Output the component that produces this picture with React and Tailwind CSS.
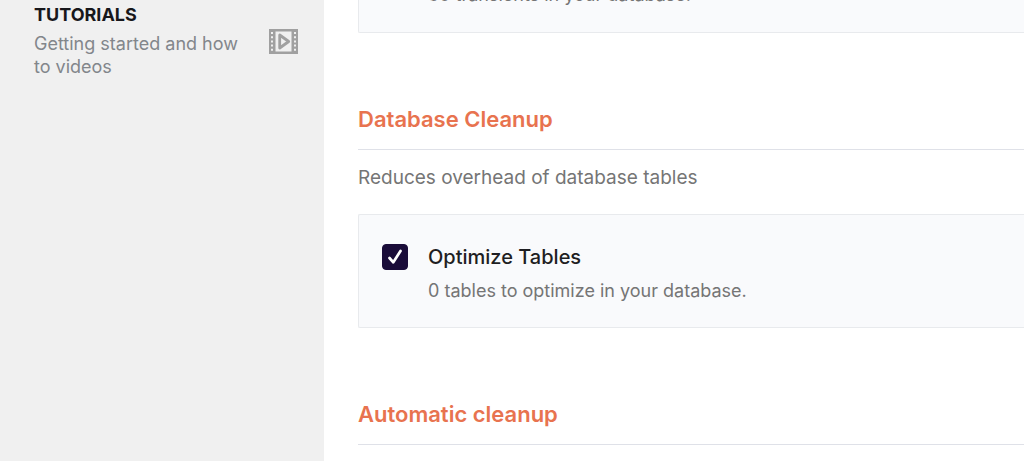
import { useState } from "react";

function VideoIcon() {
  return (
    <svg viewBox="0 0 29 25" className="h-[25px] w-[29px] shrink-0" aria-hidden="true">
      <path
        fill="#a0a0a0"
        fillRule="evenodd"
        d="M0 0h29v25H0zM6.5 2.5v20h16v-20zM2 3v2h2V3zM2 7.2v2h2v-2zM2 11.4v2h2v-2zM2 15.6v2h2v-2zM2 19.8v2h2v-2zM25 3v2h2V3zM25 7.2v2h2v-2zM25 11.4v2h2v-2zM25 15.6v2h2v-2zM25 19.8v2h2v-2z"
      />
      <path d="M10.7 6v13l9-6.5z" fill="none" stroke="#a0a0a0" strokeWidth="2.8" strokeLinejoin="round" />
    </svg>
  );
}

function SectionTitle({ children }) {
  return (
    <h2 className="mt-[70px] border-b border-[#dfe1e8] pb-[14px] text-[22px] leading-8 font-semibold text-[#e8734f]">
      {children}
    </h2>
  );
}

function OptionCard({ id, title, description, checked, onChange }) {
  return (
    <div className="flex gap-5 rounded-l-xs border border-r-0 border-[#e8eaed] bg-[#f9fafc] pt-7 pb-[23px] pl-[23px]">
      <span className="relative mt-px h-[26px] w-[26px] shrink-0">
        <input
          id={id}
          type="checkbox"
          checked={checked}
          onChange={onChange}
          className="peer block h-[26px] w-[26px] appearance-none rounded border border-[#1a0c39] bg-white checked:bg-[#1a0c39]"
        />
        <svg
          viewBox="0 0 26 26"
          className="pointer-events-none absolute inset-0 hidden peer-checked:block"
          fill="none"
          stroke="#fff"
          strokeWidth="2.7"
          strokeLinecap="round"
          strokeLinejoin="round"
          aria-hidden="true"
        >
          <path d="M7.5 14l3.8 4.3 7.2-11.3" />
        </svg>
      </span>
      <div>
        <label htmlFor={id} className="block text-xl leading-7 font-medium text-[#1e1e22]">
          {title}
        </label>
        <p className="mt-[7px] text-lg leading-[26px] text-[#757575]">{description}</p>
      </div>
    </div>
  );
}

export default function App() {
  const [optimize, setOptimize] = useState(true);

  return (
    <div className="flex h-screen overflow-hidden bg-white font-['Inter',sans-serif]">
      {/* Sidebar */}
      <aside className="w-[324px] shrink-0 bg-[#f0f0f0] pt-[3px] pr-[26px] pl-[34px]">
        <h3 className="text-lg leading-[23px] font-bold text-[#17171b]">TUTORIALS</h3>
        <div className="mt-[6px] flex items-start justify-between">
          <p className="w-[218px] text-lg leading-[23px] text-[#82868b]">Getting started and how to videos</p>
          <div className="-mt-[3px]">
            <VideoIcon />
          </div>
        </div>
      </aside>

      {/* Settings */}
      <main className="min-w-0 flex-1 pl-[34px]">
        <div className="flex h-[33px] items-start rounded-bl-xs border-b border-l border-[#e8eaed] bg-[#f9fafc] pl-[69px]">
          <p className="-mt-[18px] text-lg leading-[26px] text-[#757575]">30 transients in your database.</p>
        </div>

        <SectionTitle>Database Cleanup</SectionTitle>
        <p className="mt-[14px] mb-[22px] text-[19px] leading-7 text-[#757575]">Reduces overhead of database tables</p>
        <OptionCard
          id="optimize-tables"
          title="Optimize Tables"
          description="0 tables to optimize in your database."
          checked={optimize}
          onChange={(e) => setOptimize(e.target.checked)}
        />

        <SectionTitle>Automatic cleanup</SectionTitle>
      </main>
    </div>
  );
}
